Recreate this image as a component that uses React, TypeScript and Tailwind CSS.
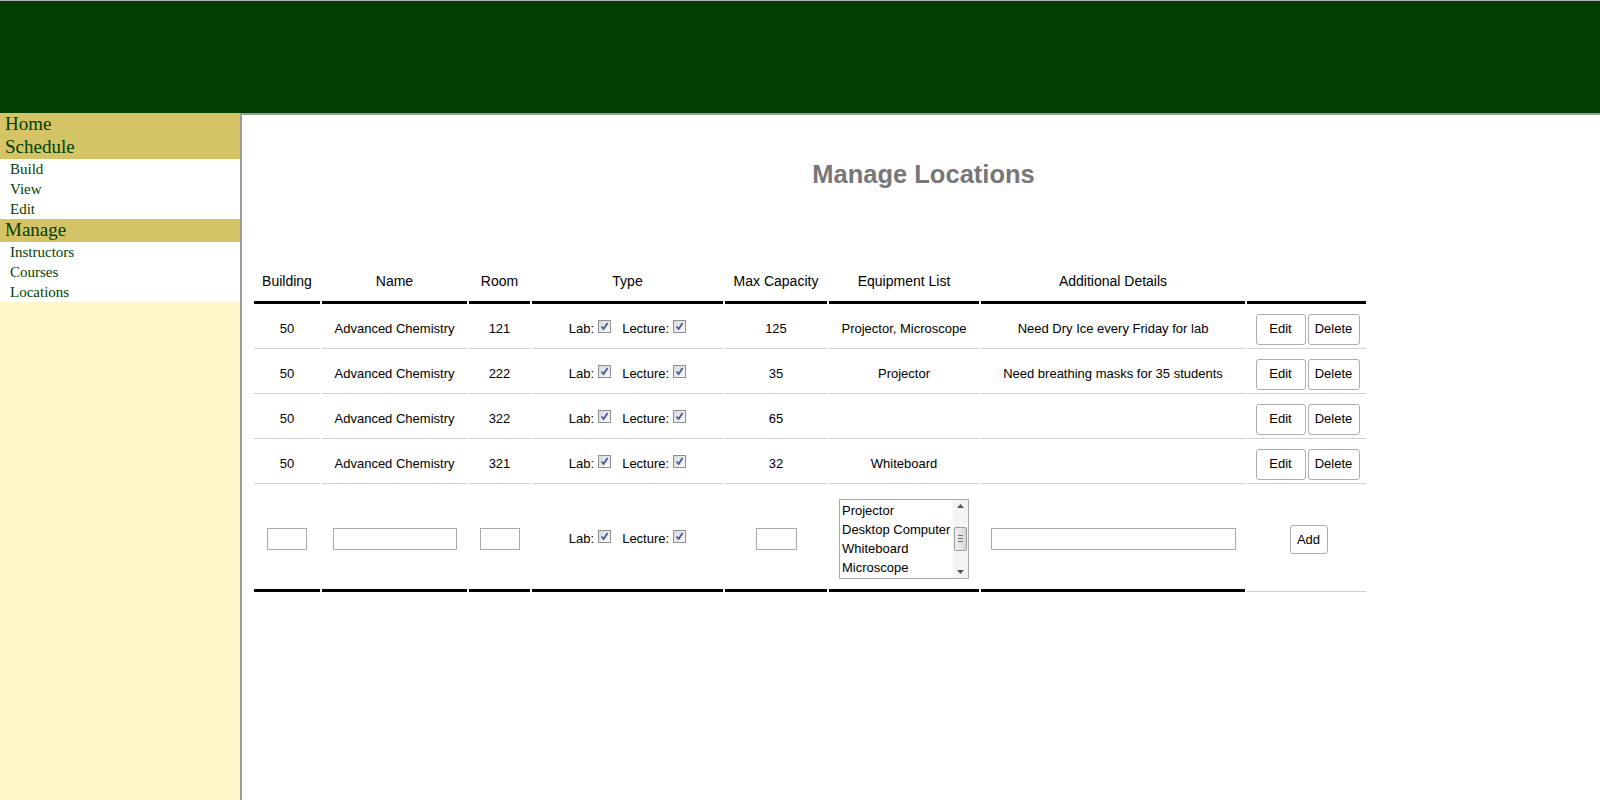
import React from "react";

type Location = {
  building: string;
  name: string;
  room: string;
  capacity: string;
  equipment: string;
  details: string;
};

const locations: Location[] = [
  { building: "50", name: "Advanced Chemistry", room: "121", capacity: "125", equipment: "Projector, Microscope", details: "Need Dry Ice every Friday for lab" },
  { building: "50", name: "Advanced Chemistry", room: "222", capacity: "35", equipment: "Projector", details: "Need breathing masks for 35 students" },
  { building: "50", name: "Advanced Chemistry", room: "322", capacity: "65", equipment: "", details: "" },
  { building: "50", name: "Advanced Chemistry", room: "321", capacity: "32", equipment: "Whiteboard", details: "" },
];

const equipmentOptions = ["Projector", "Desktop Computer", "Whiteboard", "Microscope"];

function CheckBox() {
  return (
    <span className="inline-flex h-[13px] w-[13px] items-center justify-center border border-[#8f8f8f] bg-linear-to-br from-[#d9d9d9] to-[#fafafa]">
      <svg width="11" height="11" viewBox="0 0 11 11">
        <path d="M2.5 5.5 L4.6 8 L8.6 2" fill="none" stroke="#4a5a9e" strokeWidth="1.8" />
      </svg>
    </span>
  );
}

function TypeBoxes() {
  return (
    <div className="inline-flex items-center">
      <span>Lab:</span>
      <span className="ml-[4px] -mt-[2px]">
        <CheckBox />
      </span>
      <span className="ml-[11px]">Lecture:</span>
      <span className="ml-[4px] -mt-[2px]">
        <CheckBox />
      </span>
    </div>
  );
}

function Btn({ label, w, h }: { label: string; w: string; h: string }) {
  return (
    <button className={`${w} ${h} rounded-[3px] border border-[#adadad] bg-white text-[13px] text-black`}>
      {label}
    </button>
  );
}

function EquipmentList() {
  return (
    <div className="mx-auto flex h-[80px] w-[130px] border border-[#a9a9a9] bg-white">
      <div className="flex-1 pl-[2px] pt-[1px] text-left text-[13px] leading-[19px] text-black">
        {equipmentOptions.map((o) => (
          <div key={o} className="whitespace-nowrap">
            {o}
          </div>
        ))}
      </div>
      <div className="flex w-[15px] flex-col items-center justify-between bg-[#f4f4f4] py-[4px]">
        <svg width="7" height="4" viewBox="0 0 7 4">
          <path d="M0 4 L3.5 0 L7 4 Z" fill="#555" />
        </svg>
        <div className="flex h-[24px] w-[13px] flex-col items-center justify-center gap-[2px] rounded-[2px] border border-[#9a9a9a] bg-linear-to-r from-[#f0f0f0] to-[#d8d8d8]">
          <div className="h-px w-[5px] bg-[#777]" />
          <div className="h-px w-[5px] bg-[#777]" />
          <div className="h-px w-[5px] bg-[#777]" />
        </div>
        <svg width="7" height="4" viewBox="0 0 7 4">
          <path d="M0 0 L3.5 4 L7 0 Z" fill="#555" />
        </svg>
      </div>
    </div>
  );
}

function TextBox({ w }: { w: string }) {
  return <div className={`mx-auto h-[22px] ${w} border border-[#a9a9a9] bg-white`} />;
}

export default function App() {
  const th = "h-[42px] border-b-[3px] border-black px-0 text-center align-middle text-[14px] font-normal text-black";
  const td = "h-[43px] border-b border-[#d0d0d0] pt-[4px] text-center align-middle text-[13px] text-black";
  const addTd = "h-[106px] border-b-[3px] border-black pt-[2px] text-center align-middle";

  return (
    <div className="flex min-h-screen flex-col bg-white" style={{ fontFamily: "'Liberation Sans', Arial, sans-serif" }}>
      <div className="h-[113px] border-t border-[#b4b4b4] bg-[#003f00]" />

      <div className="flex flex-1">
        <div className="w-[240px] bg-[#fff7c9] text-[#003f00]" style={{ fontFamily: "'Liberation Serif', 'Times New Roman', serif" }}>
          <div className="bg-[#d4c466]">
            <div className="h-[23px] pl-[5px] text-[19px] leading-[22px]">Home</div>
            <div className="h-[23px] pl-[5px] text-[19px] leading-[22px]">Schedule</div>
          </div>
          <div className="bg-white">
            <div className="h-5 pl-[10px] text-[15px] leading-5">Build</div>
            <div className="h-5 pl-[10px] text-[15px] leading-5">View</div>
            <div className="h-5 pl-[10px] text-[15px] leading-5">Edit</div>
          </div>
          <div className="h-[23px] bg-[#d4c466] pl-[5px] text-[19px] leading-[22px]">Manage</div>
          <div className="bg-white">
            <div className="h-5 pl-[10px] text-[15px] leading-5">Instructors</div>
            <div className="h-5 pl-[10px] text-[15px] leading-5">Courses</div>
            <div className="h-5 pl-[10px] text-[15px] leading-5">Locations</div>
          </div>
        </div>

        <div className="flex-1 border-l-2 border-t-2 border-[#9c9c9c] bg-white">
          <h1 className="ml-[5px] mt-[44px] text-center text-[25.5px] font-bold leading-[30px] text-[#777777]">
            Manage Locations
          </h1>

          <table className="ml-[10px] mt-[71px] w-[1116px] table-fixed border-separate border-spacing-[2px]">
            <thead>
              <tr>
                <th className={`${th} w-[66px]`}>Building</th>
                <th className={`${th} w-[145px]`}>Name</th>
                <th className={`${th} w-[61px]`}>Room</th>
                <th className={`${th} w-[191px]`}>Type</th>
                <th className={`${th} w-[102px]`}>Max Capacity</th>
                <th className={`${th} w-[150px]`}>Equipment List</th>
                <th className={`${th} w-[264px]`}>Additional Details</th>
                <th className={`${th} w-[119px]`}></th>
              </tr>
            </thead>
            <tbody>
              {locations.map((l) => (
                <tr key={l.room}>
                  <td className={td}>{l.building}</td>
                  <td className={td}>{l.name}</td>
                  <td className={td}>{l.room}</td>
                  <td className={td}>
                    <TypeBoxes />
                  </td>
                  <td className={td}>{l.capacity}</td>
                  <td className={td}>{l.equipment}</td>
                  <td className={td}>{l.details}</td>
                  <td className={td}>
                    <div className="flex justify-center gap-[2px] pl-[2px]">
                      <Btn label="Edit" w="w-[50px]" h="h-[31px]" />
                      <Btn label="Delete" w="w-[52px]" h="h-[31px]" />
                    </div>
                  </td>
                </tr>
              ))}
              <tr>
                <td className={addTd}>
                  <TextBox w="w-[40px]" />
                </td>
                <td className={addTd}>
                  <TextBox w="w-[124px]" />
                </td>
                <td className={addTd}>
                  <TextBox w="w-[40px]" />
                </td>
                <td className={`${addTd} text-[13px] text-black`}>
                  <TypeBoxes />
                </td>
                <td className={addTd}>
                  <TextBox w="w-[41px]" />
                </td>
                <td className={addTd}>
                  <EquipmentList />
                </td>
                <td className={addTd}>
                  <TextBox w="w-[245px]" />
                </td>
                <td className="h-[106px] border-b border-[#d0d0d0] pt-[2px] text-center align-middle">
                  <div className="flex justify-center pl-[4px]">
                    <Btn label="Add" w="w-[38px]" h="h-[29px]" />
                  </div>
                </td>
              </tr>
            </tbody>
          </table>
        </div>
      </div>
    </div>
  );
}
